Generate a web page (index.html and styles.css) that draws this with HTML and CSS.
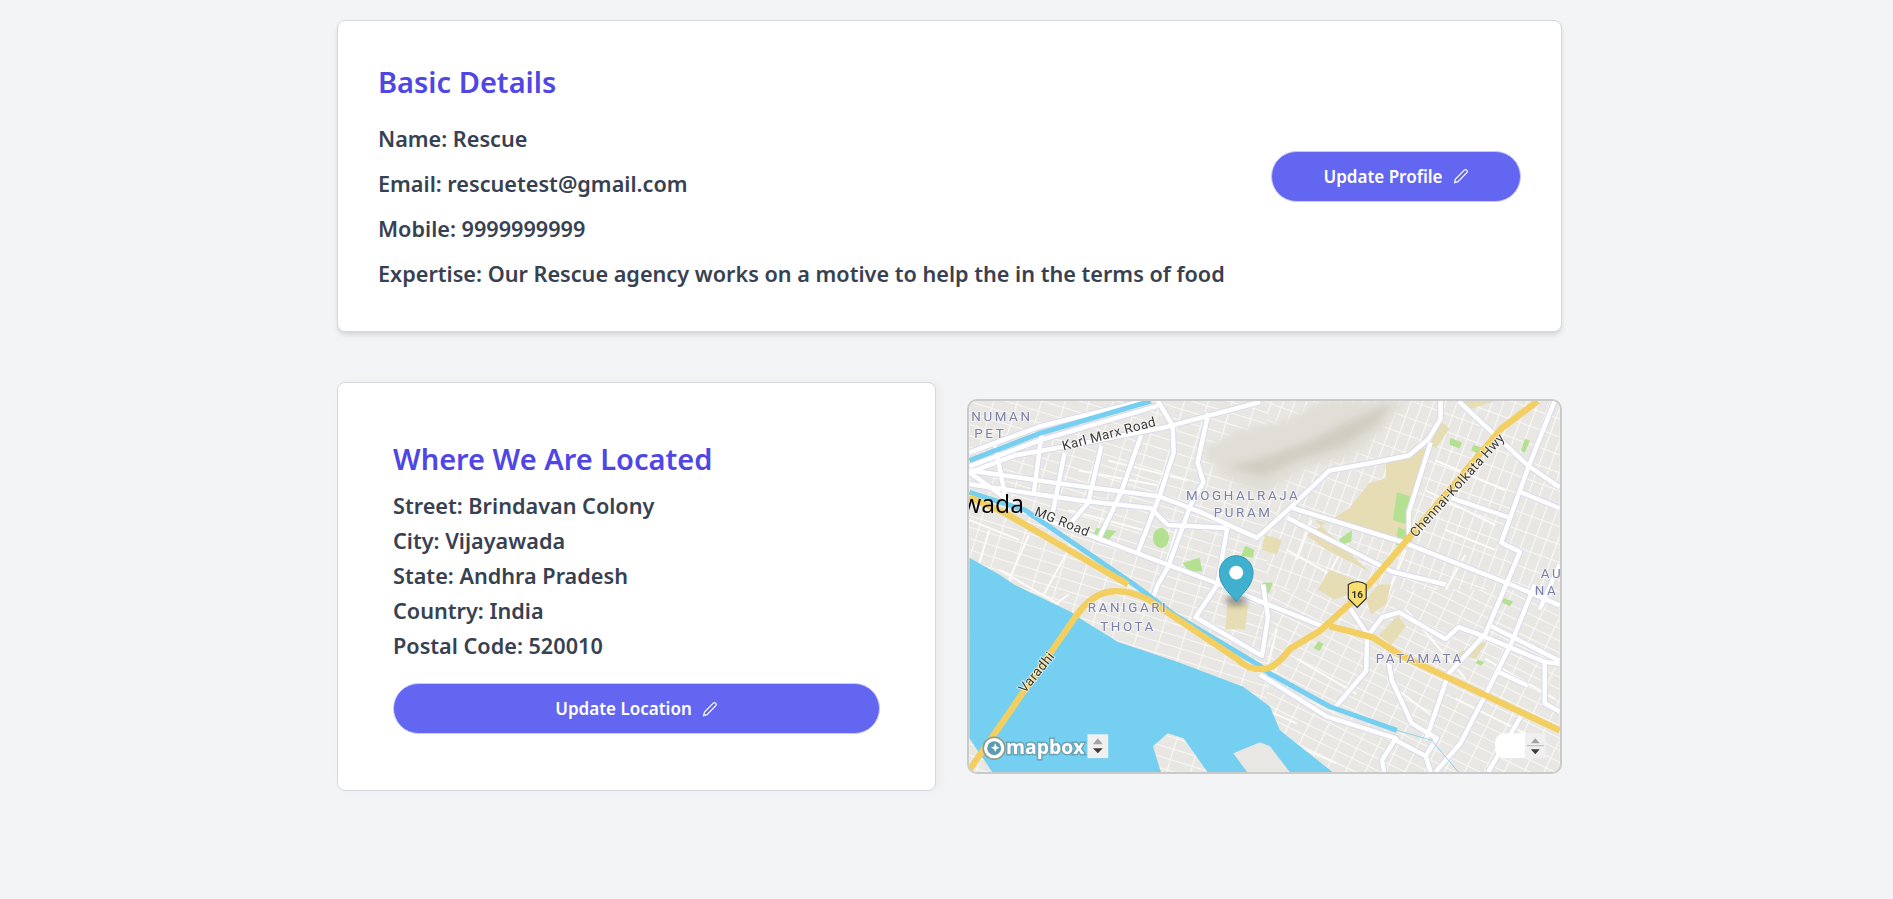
FILE: index.html
```html
<!DOCTYPE html>
<html lang="en">
<head>
    <meta charset="UTF-8">
    <meta name="viewport" content="width=device-width, initial-scale=1.0">
    <title>Rescue Agency Profile</title>
    <link rel="stylesheet" href="styles.css">
</head>
<body>
    <div class="page">
        <section class="card details-card">
            <div class="details-text">
                <h2 class="title">Basic Details</h2>
                <p class="detail">Name: Rescue</p>
                <p class="detail">Email: rescuetest@gmail.com</p>
                <p class="detail">Mobile: 9999999999</p>
                <p class="detail">Expertise: Our Rescue agency works on a motive to help the in the terms of food</p>
            </div>
            <button class="btn btn-profile">
                Update Profile
                <svg class="pencil" viewBox="0 0 16 16"><path d="M11.3 2.2a1.700 1.700 0 0 1 2.500 2.400L5 13.600l-3.400 1 .9-3.500z"/></svg>
            </button>
        </section>

        <div class="location-row">
            <section class="card location-card">
                <h2 class="title">Where We Are Located</h2>
                <p class="address">Street: Brindavan Colony</p>
                <p class="address">City: Vijayawada</p>
                <p class="address">State: Andhra Pradesh</p>
                <p class="address">Country: India</p>
                <p class="address">Postal Code: 520010</p>
                <button class="btn btn-location">
                    Update Location
                    <svg class="pencil" viewBox="0 0 16 16"><path d="M11.3 2.2a1.700 1.700 0 0 1 2.500 2.400L5 13.600l-3.400 1 .9-3.500z"/></svg>
                </button>
            </section>

            <div class="map">
                <svg class="map-canvas" viewBox="0 0 595 374">
                    <defs>
                        <pattern id="streets-a" width="23" height="11" patternUnits="userSpaceOnUse" patternTransform="rotate(17)">
                            <path class="street" d="M0 .5H23M.5 0V11"/>
                        </pattern>
                        <pattern id="streets-b" width="11" height="17" patternUnits="userSpaceOnUse" patternTransform="rotate(20)">
                            <path class="street" d="M0 .5H11M.5 0V17"/>
                        </pattern>
                        <pattern id="streets-c" width="18" height="11" patternUnits="userSpaceOnUse" patternTransform="rotate(26)">
                            <path class="street" d="M0 .5H18M.5 0V11"/>
                        </pattern>
                        <g id="roads">
                            <path d="M0 72L45 55 96 46 195 27 293 1"/>
                            <path d="M0 52L70 26 175 0"/>
                            <path d="M0 66L70 40 190 5"/>
                            <path d="M0 70L90 83 191 96 233 112 290 138 323 108 363 70 403 63 443 55 463 38 475 18V0"/>
                            <path d="M0 84L110 100 183 108 200 125 260 128"/>
                            <path d="M0 72L56 112 120 135 253 185 293 202 356 227"/>
                            <path d="M326 108L436 142 546 185 595 206"/>
                            <path d="M321 118L426 172 480 185"/>
                            <path d="M465 42L443 112V135"/>
                            <path d="M590 0L563 68 536 143 555 152 520 235 483 275 460 342"/>
                            <path d="M493 0L563 65 595 87"/>
                            <path d="M556 92L595 108"/>
                            <path d="M486 98L543 117"/>
                            <path d="M241 12L230 62 236 82 223 105 200 168 190 185 183 205"/>
                            <path d="M190 0L205 25 206 52 193 92 170 152"/>
                            <path d="M173 35L153 92 131 138"/>
                            <path d="M133 45L120 102 103 122"/>
                            <path d="M96 52L83 118"/>
                            <path d="M73 32L65 92"/>
                            <path d="M26 45L36 95"/>
                            <path d="M260 128L250 185 228 218 295 257 301 218 296 185"/>
                            <path d="M383 208L401 235 400 272 366 312"/>
                            <path d="M403 235L416 218 433 213 480 240 493 228 513 235 580 263 595 265"/>
                            <path d="M423 265L426 282 446 325 471 340 460 358 465 374"/>
                            <path d="M293 276L303 282 360 318 430 340 416 362 418 374"/>
                            <path d="M430 342L460 358"/>
                            <path d="M570 185L546 245 526 285"/>
                            <path d="M526 285L495 345 470 374"/>
                            <path d="M556 318L523 374"/>
                            <path d="M580 265V305L595 313"/>
                            <path d="M533 273L563 287"/>
                            <path d="M526 227L595 262"/>
                            <path d="M595 165L575 210"/>
                        </g>
                        <g id="lanes">
                            <path d="M20 130L8 170M60 135L40 180M100 150L75 195M0 120L50 140M30 170L90 205M60 225L100 195"/>
                            <path d="M140 60L220 80M110 70L190 85M100 110L175 130M210 125L195 175M160 150L220 170"/>
                            <path d="M320 150L400 195M345 120L330 160M375 150L355 190M440 150L420 200"/>
                            <path d="M470 60L540 90M460 90L530 125M480 130L530 150M500 155L480 190"/>
                            <path d="M310 230L300 270M330 260L390 295M250 290L330 325M300 335L370 365M440 210L500 280"/>
                            <path d="M490 300L570 340M520 260L590 300M430 290L470 320"/>
                        </g>
                    </defs>

                    <rect class="land" width="595" height="374"/>
                    <rect fill="url(#streets-a)" width="300" height="374"/>
                    <rect fill="url(#streets-b)" x="300" width="295" height="190"/>
                    <rect fill="url(#streets-c)" x="300" y="190" width="295" height="184"/>
                    <use href="#lanes" class="lane"/>

                    <path class="hill" d="M235 50L270 30 320 20 355 0H440L420 25 395 50 370 60 345 65 310 85 293 95 255 75z"/>
                    <path class="ridge" d="M262 66L300 56 340 42 375 24 425 2 410 24 375 46 335 58 295 76z"/>

                    <path class="sand" d="M383 108L403 83 420 78V62L465 45 443 108 440 138 348 120 403 172 360 150 340 135z"/>
                    <path class="sand" d="M298 135L315 140 310 155 295 150zM260 205H281L278 230H258zM413 236L432 216 440 227 425 246zM505 8L530 0H490zM475 20L484 28 470 48 465 42zM490 255L522 242 510 260zM363 170L388 180 383 195 368 200 351 190zM400 200L412 185H425L420 205 405 215z"/>
                    <path class="park" d="M148 131L128 128 125 135 140 140zM192 148a8 10 0 1 1 1 .1zM232 158L215 163 221 172 235 172zM278 146L287 150 286 158 274 156zM431 92L447 97 443 125 427 120zM432 127L447 133 445 148 430 145zM373 139L386 130 385 142 375 145zM485 37L497 42 494 48 484 44zM508 44L516 47 513 53 506 50zM560 38L565 40 560 52 556 50zM296 183H306L302 194 294 190zM352 242L357 245 353 252 347 249zM537 198L548 202 545 207 535 202zM513 261L519 263 516 267 510 264z"/>

                    <path class="water" d="M0 158L30 175 45 185 103 213 116 222 150 243 210 263 276 288 303 308 313 332 366 374H240L216 340 200 335 185 348 193 374H23L0 340z"/>
                    <path class="land" d="M266 355L293 344 303 348 323 374H280z"/>

                    <use href="#roads" class="road-case"/>
                    <use href="#roads" class="road"/>

                    <path class="canal" d="M0 60L70 33 183 0"/>
                    <path class="canal" d="M0 92L56 110 166 185 206 215 293 267 303 275 363 308 431 332"/>
                    <path class="creek" d="M431 332L466 342 493 374"/>

                    <path class="highway" d="M0 97L36 113 160 185"/>
                    <path class="highway" d="M0 372L108 216Q124 194 143 192 160 190 180 200L270 260Q282 272 298 270 310 268 323 250L353 232 383 205 403 185 443 138 536 28 573 0"/>
                    <path class="highway" d="M363 227L406 238 436 257 595 332"/>

                    <text class="map-place" x="2" y="20">NUMAN</text>
                    <text class="map-place" x="5" y="37">PET</text>
                    <text class="map-place" x="276" y="100" text-anchor="middle">MOGHALRAJA</text>
                    <text class="map-place" x="276" y="117" text-anchor="middle">PURAM</text>
                    <text class="map-place" x="160" y="213" text-anchor="middle">RANIGARI</text>
                    <text class="map-place" x="160" y="232" text-anchor="middle">THOTA</text>
                    <text class="map-place" x="454" y="264" text-anchor="middle">PATAMATA</text>
                    <text class="map-place" x="576" y="178">AU</text>
                    <text class="map-place" x="570" y="196">NA</text>

                    <text class="map-road" transform="translate(95 50) rotate(-15)">Karl Marx Road</text>
                    <text class="map-road" transform="translate(65 115) rotate(22)">MG Road</text>
                    <text class="map-road" transform="translate(450 138) rotate(-48)">Chennai-Kolkata Hwy</text>
                    <text class="map-road" transform="translate(56 295) rotate(-51)">Varadhi</text>

                    <text class="map-city" x="55" y="113" text-anchor="end">Vijayawada</text>

                    <path class="shield" d="M382 185L386 183 391 182 396 183 400 185V199L391 208 382 199z"/>
                    <text class="shield-num" x="391" y="199" text-anchor="middle">16</text>

                    <ellipse class="pin-shadow" cx="269" cy="201" rx="11" ry="5"/>
                    <path class="pin" d="M269 202C262 193 252 186 252 173a17 17 0 0 1 34 0C286 186 276 193 269 202z"/>
                    <circle class="pin-dot" cx="269" cy="173" r="7"/>

                    <circle class="logo-ring" cx="25" cy="350" r="11"/>
                    <circle class="logo-inner" cx="25" cy="350" r="7"/>
                    <path class="logo-star" d="M26 345l1.500 3.300 3 1.200-3 1.300-1.500 3-1.300-3-3-1.300 3-1.200z"/>
                    <text class="logo-text" x="37" y="356">mapbox</text>

                    <rect class="spin-box" x="119" y="336" width="21" height="24"/>
                    <path class="spin-up" d="M129.500 340l5 6h-10z"/>
                    <path class="spin-down" d="M124.500 350h10l-5 5z"/>

                    <rect class="spin-blank" x="530" y="335" width="36" height="25" rx="9"/>
                    <rect class="spin-box" x="560" y="335" width="21" height="25"/>
                    <path class="spin-up" d="M570.500 340l4.500 5h-9z"/>
                    <path class="spin-line" d="M562 347.500h17"/>
                    <path class="spin-down" d="M566 351h9l-4.500 5z"/>
                </svg>
            </div>
        </div>
    </div>
</body>
</html>
```

FILE: styles.css
```css
body {
    margin: 0;
    background: #f3f4f6;
    font-family: "Noto Sans", "Open Sans", sans-serif;
    color: #374151;
}

.page {
    padding: 20px 331px 60px 337px;
}

.card {
    box-sizing: border-box;
    background: #fff;
    border: 1px solid #d5d8de;
    border-radius: 8px;
}

.title {
    margin: 0;
    font-size: 29px;
    line-height: 40px;
    font-weight: 600;
    color: #4f46e5;
}

/* basic details */
.details-card {
    display: flex;
    align-items: center;
    justify-content: space-between;
    height: 312px;
    padding: 0 40px 3px;
    box-shadow: 0 4px 6px -1px rgba(0, 0, 0, 0.1), 0 2px 4px -2px rgba(0, 0, 0, 0.1);
}

.details-text .title {
    margin-bottom: 23px;
}

.detail {
    margin: 0 0 17px;
    font-size: 21.65px;
    line-height: 28px;
    font-weight: 600;
}

.detail:last-child {
    margin-bottom: 0;
}

/* buttons */
.btn {
    display: flex;
    align-items: center;
    justify-content: center;
    gap: 10px;
    height: 51px;
    padding: 0;
    background: #6366f1;
    border: 1px solid #c9cbf8;
    border-radius: 26px;
    color: #fff;
    font-family: inherit;
    font-size: 17px;
    font-weight: 600;
    cursor: pointer;
}

.btn-profile {
    width: 250px;
    margin-top: 3px;
}

.btn-location {
    width: 487px;
    margin-top: 20px;
}

.pencil {
    width: 16px;
    height: 16px;
    fill: none;
    stroke: #fff;
    stroke-width: 1.2;
}

/* location */
.location-row {
    display: flex;
    align-items: center;
    gap: 31px;
    margin-top: 50px;
}

.location-card {
    width: 599px;
    height: 409px;
    padding: 56px 55px 0;
    box-shadow: 4px 0 8px rgba(0, 0, 0, 0.04);
}

.location-card .title {
    margin-bottom: 9px;
}

.address {
    margin: 0;
    font-size: 21.65px;
    line-height: 35px;
    font-weight: 600;
}

/* map */
.map {
    box-sizing: border-box;
    width: 595px;
    height: 375px;
    border: 2px solid #cacaca;
    border-radius: 10px;
    overflow: hidden;
}

.map-canvas {
    display: block;
    width: 100%;
    height: 100%;
    filter: blur(0.3px);
}

.land {
    fill: #e9e7e3;
}

.street {
    fill: none;
    stroke: #f9f8f6;
    stroke-width: 1.2;
}

.lane {
    fill: none;
    stroke: #fbfbfa;
    stroke-width: 2;
}

.hill {
    fill: #e0ded6;
    filter: blur(3px);
}

.ridge {
    fill: #d0cec2;
    filter: blur(4px);
}

.sand {
    fill: #e6ddb4;
}

.park {
    fill: #b3e191;
}

.water {
    fill: #75cff0;
}

.road-case, .road, .canal, .creek, .highway {
    fill: none;
    stroke-linejoin: round;
}

.road-case {
    stroke: #d8d9ec;
    stroke-width: 6.5;
}

.road {
    stroke: #fff;
    stroke-width: 4.5;
}

.canal {
    stroke: #75cff0;
    stroke-width: 5;
}

.creek {
    stroke: #8fd3ee;
    stroke-width: 1;
}

.highway {
    stroke: #f3cf62;
    stroke-width: 6.5;
}

.map-place {
    font-family: Roboto, "Noto Sans", sans-serif;
    font-size: 13.5px;
    letter-spacing: 2.6px;
    fill: #7b80a8;
    stroke: #fff;
    stroke-width: 2px;
    stroke-opacity: 0.5;
    paint-order: stroke;
}

.map-road {
    font-family: Roboto, "Noto Sans", sans-serif;
    font-size: 13.5px;
    letter-spacing: 0.4px;
    fill: #3a3a36;
    stroke: #fff;
    stroke-width: 2px;
    stroke-opacity: 0.6;
    paint-order: stroke;
}

.map-city {
    font-family: "Open Sans", sans-serif;
    font-size: 25px;
    fill: #000;
}

.shield {
    fill: #f9df70;
    stroke: #2f2f2a;
    stroke-width: 1.2;
}

.shield-num {
    font-family: Roboto, sans-serif;
    font-size: 10px;
    font-weight: 700;
    fill: #2f2f2a;
}

.pin-shadow {
    fill: rgba(0, 0, 0, 0.4);
    filter: blur(3px);
}

.pin {
    fill: #3fb1ce;
    stroke: #3596b0;
}

.pin-dot {
    fill: #fff;
}

.logo-ring {
    fill: #fff;
    stroke: #8f9a86;
    stroke-width: 1.5;
}

.logo-inner {
    fill: #5c9bb0;
}

.logo-star {
    fill: #fff;
}

.logo-text {
    font-family: "Open Sans", sans-serif;
    font-size: 19.5px;
    font-weight: 700;
    fill: #fff;
    stroke: #6ba3b7;
    stroke-width: 3px;
    paint-order: stroke;
}

.spin-box {
    fill: #f0f0f0;
}

.spin-blank {
    fill: #fff;
}

.spin-up {
    fill: #a3a3a3;
}

.spin-down {
    fill: #3c3c3c;
}

.spin-line {
    stroke: #b5b5b5;
    fill: none;
}
```
